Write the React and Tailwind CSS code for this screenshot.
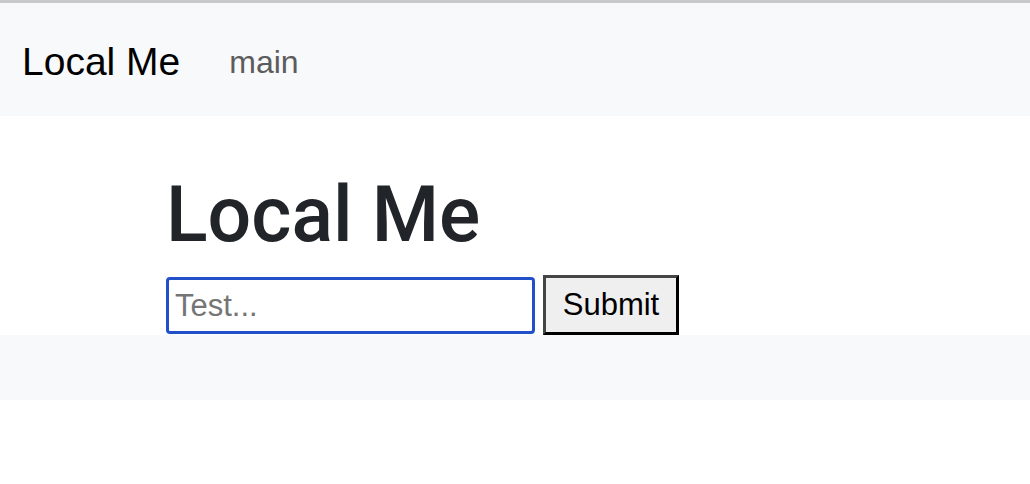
import { useState } from "react";

const App = () => {
  const [query, setQuery] = useState("");

  return (
    <div className="min-h-[484px] bg-white font-['Liberation_Sans',Arial,sans-serif]">
      {/* Navbar */}
      <nav className="h-[116px] border-t-[3px] border-[#c8c9ca] bg-[#f8f9fa] flex items-center pl-[22px] pt-[4px]">
        <a href="#" className="text-[39px] leading-none text-black">
          Local Me
        </a>
        <a href="#" className="ml-[49px] text-[32px] leading-none text-[#5c5c5c]">
          main
        </a>
      </nav>

      {/* Main content */}
      <main className="h-[219px] pl-[166px] pt-[53px]">
        <h1 className="font-['Roboto',sans-serif] text-[77px] leading-[1.2] font-medium text-[#212529]">
          Local Me
        </h1>
        <form
          className="mt-[14px] flex items-end gap-[8px]"
          onSubmit={(e) => e.preventDefault()}
        >
          <input
            type="text"
            value={query}
            onChange={(e) => setQuery(e.target.value)}
            placeholder="Test..."
            className="w-[369px] h-[57px] mb-[1px] rounded-[4px] border-[3px] border-[#2150c8] pl-[6px] text-[31px] text-black placeholder:text-[#757575] outline-none"
          />
          <button
            type="submit"
            className="w-[136px] h-[60px] bg-[#efefef] border-[3px] border-t-[#454545] border-l-[#454545] border-r-black border-b-black text-[31px] text-black"
          >
            Submit
          </button>
        </form>
      </main>

      {/* Footer */}
      <footer className="h-[65px] bg-[#f8f9fa]"></footer>
    </div>
  );
};

export default App;
